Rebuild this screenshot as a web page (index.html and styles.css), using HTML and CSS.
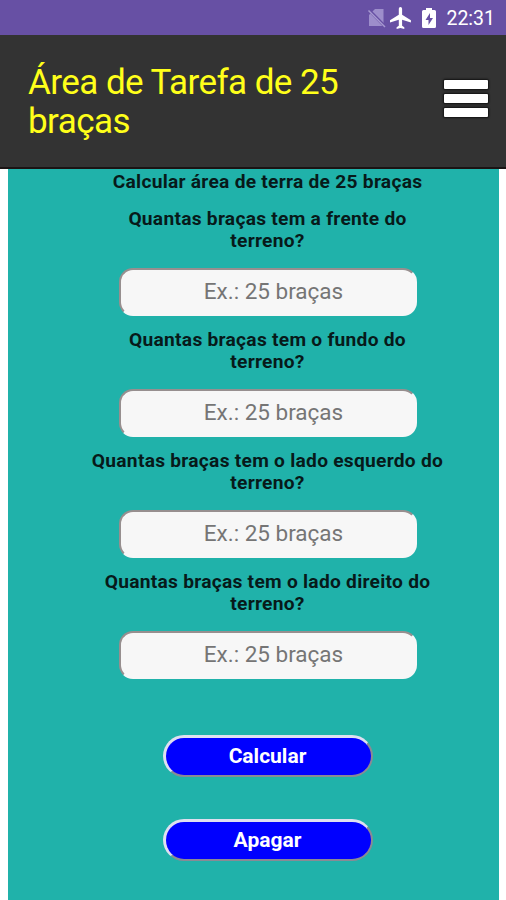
FILE: index.html
```html
<!DOCTYPE html>
<html lang="pt-BR">
<head>
  <meta charset="UTF-8">
  <meta name="viewport" content="width=device-width, initial-scale=1.0">
  <title>Área de Tarefa de 25 braças</title>
  <link rel="stylesheet" href="styles.css">
</head>
<body>

  <!-- Status bar -->
  <div class="status-bar">
    <svg class="sim" width="18" height="20" viewBox="0 0 18 20">
      <path d="M7 1h8.500v17H1V7z" fill="#9d8ecb"/>
      <path d="M0 1l17.500 18" stroke="#6750a4" stroke-width="3"/>
      <path d="M0.500 2.500l16.500 16.500" stroke="#a799d1" stroke-width="1.500"/>
    </svg>
    <svg class="plane" width="22" height="22" viewBox="2 2 20 20">
      <path d="M21 16v-2l-8-5V3.500a1.500 1.500 0 0 0-3 0V9l-8 5v2l8-2.500V19l-2 1.500V22l3.500-1 3.500 1v-1.500L13 19v-5.500z" fill="#fff"/>
    </svg>
    <svg class="battery" width="14" height="20" viewBox="0 0 14 20">
      <path d="M4 0h6v2h2.500q1.500 0 1.500 1.500v15q0 1.500-1.500 1.500h-11Q0 20 0 18.500v-15Q0 2 1.500 2H4z" fill="#fff"/>
      <path d="M8 5L3.500 12H6.500v5L11 10H8z" fill="#6750a4"/>
    </svg>
    <span class="clock">22:31</span>
  </div>

  <!-- Header -->
  <header class="header">
    <h1>Área de Tarefa de 25 braças</h1>
    <button class="menu" aria-label="Menu">
      <span></span>
      <span></span>
      <span></span>
    </button>
  </header>

  <!-- Form -->
  <main class="content">
    <h2>Calcular área de terra de 25 braças</h2>
    <form class="form-container">
      <label for="frente">Quantas braças tem a frente do terreno?</label>
      <input type="text" id="frente" placeholder="Ex.: 25 braças">
      <label for="fundo">Quantas braças tem o fundo do terreno?</label>
      <input type="text" id="fundo" placeholder="Ex.: 25 braças">
      <label for="esquerdo">Quantas braças tem o lado esquerdo do terreno?</label>
      <input type="text" id="esquerdo" placeholder="Ex.: 25 braças">
      <label for="direito">Quantas braças tem o lado direito do terreno?</label>
      <input type="text" id="direito" placeholder="Ex.: 25 braças">
      <div class="actions">
        <button type="button">Calcular</button>
        <button type="reset">Apagar</button>
      </div>
    </form>
  </main>

</body>
</html>
```

FILE: styles.css
```css
* {
  box-sizing: border-box;
}
body {
  font-family: Roboto, "Liberation Sans", sans-serif;
  margin: 0;
  height: 900px;
  display: flex;
  flex-direction: column;
  background-color: white;
  overflow: hidden;
}
.status-bar {
  display: flex;
  align-items: center;
  justify-content: flex-end;
  height: 35px;
  padding-right: 11px;
  background-color: #6750a4;
  color: white;
}
.sim {
  margin-right: 4px;
}
.battery {
  margin: 0 10px 0 10px;
}
.clock {
  padding-top: 2px;
  font-size: 19.500px;
  line-height: 33px;
}
.header {
  display: flex;
  align-items: center;
  justify-content: space-between;
  height: 134px;
  padding: 0 18px 0 28px;
  background-color: #333;
  border-bottom: 2px solid #1b1414;
}
.header h1 {
  width: 340px;
  margin: 0;
  padding-top: 2px;
  font-size: 35px;
  font-weight: 400;
  line-height: 39px;
  letter-spacing: -0.550px;
  color: #ffff1a;
}
.menu {
  display: flex;
  flex-direction: column;
  gap: 5px;
  margin-top: -6px;
  padding: 0;
  border: none;
  background: none;
}
.menu span {
  width: 44px;
  height: 9px;
  border-radius: 1px;
  background-color: white;
  box-shadow: 0 0 2px 1px #111;
}
.content {
  flex: 1;
  margin: 0 7px 0 8px;
  padding: 2px 0 0 28px;
  background-color: #20b2aa;
  color: #071a1a;
  text-align: center;
}
.content h2 {
  margin: 0 0 14px;
  font-size: 19.200px;
  font-weight: 700;
  line-height: 22.500px;
  letter-spacing: 0.260px;
}
.form-container {
  display: flex;
  flex-direction: column;
  align-items: center;
}
.form-container label {
  width: 354px;
  font-size: 19.200px;
  font-weight: 700;
  line-height: 22.500px;
  letter-spacing: 0.260px;
}
.form-container input {
  width: 298px;
  height: 48px;
  margin: 15px 0 13px;
  padding: 0 0 2px 12px;
  border: 2px solid;
  border-color: #978f8f #f7f7f7 #f7f7f7 #978f8f;
  border-radius: 14px;
  background-color: #f7f7f7;
  font-family: inherit;
  font-size: 22.500px;
  text-align: center;
}
.form-container input::placeholder {
  color: #757575;
}
.actions {
  display: flex;
  flex-direction: column;
  gap: 42px;
  margin-top: 43px;
}
.actions button {
  width: 210px;
  height: 42px;
  padding: 0 1px 0 0;
  border: 3px solid;
  border-width: 3px 2px 2px 3px;
  border-color: #dfdff0 #8a8a94 #8a8a94 #dfdff0;
  border-radius: 21px;
  background-color: blue;
  color: white;
  font-family: inherit;
  font-size: 21px;
  font-weight: 700;
}
```
